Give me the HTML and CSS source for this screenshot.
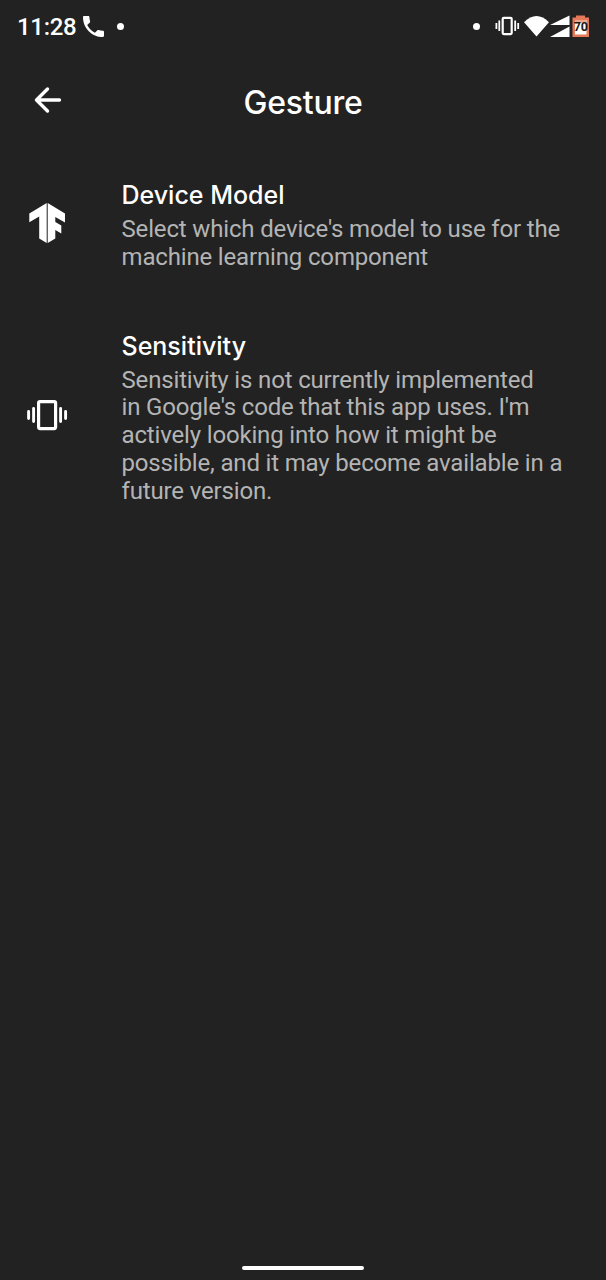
FILE: index.html
```
<!DOCTYPE html>
<html lang="en">
<head>
<meta charset="utf-8">
<title>Gesture</title>
<link rel="stylesheet" href="styles.css">
</head>
<body>
<div class="screen">
  <div class="status">
    <span class="clock">11:28</span>
    <svg class="phone" viewBox="3 3 18 18"><path d="M6.6 10.8c1.4 2.8 3.8 5.1 6.6 6.6l2.2-2.2c.3-.3.7-.4 1-.2 1.1.4 2.3.6 3.6.6.6 0 1 .4 1 1V20c0 .6-.4 1-1 1C10.600 21 3 13.400 3 4c0-.6.4-1 1-1h3.500c.6 0 1 .4 1 1 0 1.200.2 2.400.6 3.600.1.3 0 .7-.2 1z"/></svg>
    <i class="dot"></i>
    <span class="gap"></span>
    <i class="dot dot-right"></i>
    <svg class="tray" viewBox="0 0 98 26">
      <g fill="none" stroke="#fff" stroke-width="1.800"><rect x="7.700" y="4.900" width="9" height="16.200" rx="1" stroke-width="2.200"/><path d="M1.400 10v6M4.300 7.500v10.500M20.200 7.500v10.500M23.200 10v6"/></g>
      <path d="M29 9.200Q41.500-3 54 9.200L41.500 23.500Z"/>
      <path d="M55 12 74.500 2.500V12ZM55 24 74.500 13.600V24Z"/>
      <path fill="#e47858" d="M81 2.500h9v2h4V24H77.500V4.500H81Z"/>
      <path d="M80 7h11.500v14.500H80Z"/>
      <path fill="#e9a78f" d="M80 7h11.500v3H80Z"/>
      <text x="85.800" y="18" class="level">70</text>
    </svg>
  </div>
  <header class="bar">
    <svg class="back" viewBox="0 0 28 28"><path d="M25.500 14H2.800M13.500 3 2.500 14l11 11"/></svg>
    <h1>Gesture</h1>
  </header>
  <main>
    <section class="item">
      <svg class="icon tensor" viewBox="0 0 42 42"><path d="M20.700 1v40l-7.500-4.500V14.500L3.300 20.200V11.600ZM21.700 1 39 11.600v8.800l-9.700-5.400v5l6 3.400v8.100l-6-3.400v8.400L21.700 41Z"/></svg>
      <div class="copy">
        <h2>Device Model</h2>
        <p>Select which device's model to use for the<br>machine learning component</p>
      </div>
    </section>
    <section class="item">
      <svg class="icon vibrate" viewBox="0 0 42 42"><g fill="none" stroke="#fff" stroke-width="3.200"><rect x="12.600" y="7.600" width="17" height="27" rx="1.500"/><path d="M2.600 17.500v7M7.600 14.500v13M34.600 14.500v13M39.600 17.500v7" stroke-width="2.900" stroke-linecap="round"/></g></svg>
      <div class="copy">
        <h2>Sensitivity</h2>
        <p>Sensitivity is not currently implemented<br>in Google's code that this app uses. I'm<br>actively looking into how it might be<br>possible, and it may become available in a<br>future version.</p>
      </div>
    </section>
  </main>
  <div class="home"></div>
</div>
</body>
</html>
```
FILE: styles.css
```
* { box-sizing: border-box; margin: 0; padding: 0; }
body { background: #222; color: #fff; font-family: Roboto, "Liberation Sans", sans-serif; }
.screen { width: 606px; height: 1280px; display: flex; flex-direction: column; align-items: stretch; overflow: hidden; }
svg { display: block; flex: none; fill: #fff; }
.status { height: 52px; padding: 0 13px 0 17px; display: flex; align-items: center; }
.clock { width: 60px; font-size: 24px; font-weight: 500; letter-spacing: -0.3px; padding-top: 2px; white-space: nowrap; }
.phone { width: 21px; height: 21px; margin-left: 6px; }
.dot { width: 7px; height: 7px; border-radius: 50%; background: #fff; margin-left: 13px; }
.gap { flex: 1; }
.dot-right { margin: 0 15px 0 0; }
.tray { width: 98px; height: 26px; }
.level { fill: #211815; font: 700 12.5px Roboto, sans-serif; text-anchor: middle; }
.bar { height: 98px; display: grid; grid-template-columns: 94px 1fr 94px; align-items: center; }
.back { width: 28px; height: 28px; margin: 0 0 2px 33.5px; fill: none; stroke: #fff; stroke-width: 3.4; stroke-linecap: round; stroke-linejoin: round; }
h1, h2 { font-family: Inter, sans-serif; font-weight: 500; white-space: nowrap; }
h1 { font-size: 32px; line-height: 40px; letter-spacing: -0.25px; text-align: center; padding-top: 4px; }
main { flex: 1; padding-top: 28px; }
.item { display: flex; align-items: center; margin-bottom: 57px; }
.icon { width: 42px; height: 42px; margin: 0 53px 4px 26px; }
.copy { flex: 1; padding-left: 0.5px; }
h2 { font-size: 25px; line-height: 34px; height: 38px; }
p { font-size: 24px; line-height: 27.800px; letter-spacing: -0.16px; color: #b4b4b4; white-space: nowrap; }
.home { width: 122px; height: 4px; border-radius: 2px; background: #fff; margin: 0 auto 10px; }
```
